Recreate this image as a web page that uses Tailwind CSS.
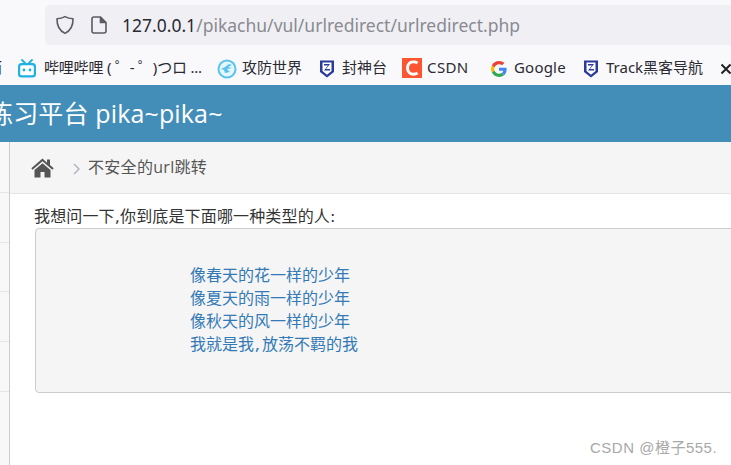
<!DOCTYPE html>
<html>
<head>
<meta charset="utf-8">
<script src="https://cdn.jsdelivr.net/npm/@tailwindcss/browser@4"></script>
</head>
<body class="w-[731px] h-[465px] overflow-hidden bg-white font-['Open_Sans','Noto_Sans_CJK_SC',sans-serif] relative">
  <!-- URL bar -->
  <div class="h-[51px] bg-[#f9f9fb] pt-[5px] pl-[45px]">
    <div class="h-[40px] bg-[#f0f0f4] rounded-l-[5px] flex items-center">
      <svg class="ml-[10px] w-[20px] h-[20px]" viewBox="0 0 20 20" fill="none" stroke="#5b5b66" stroke-width="1.6"><path d="M10 1.600 C12.500 3 15 3.600 18 3.800 C18.200 11 15.500 15.800 10 18.400 C4.500 15.800 1.800 11 2 3.800 C5 3.600 7.500 3 10 1.600Z" stroke-linejoin="round"/></svg>
      <svg class="ml-[16px] w-[16px] h-[18px]" viewBox="0 0 16 18" fill="none" stroke="#5b5b66" stroke-width="1.6"><path d="M3 1h6.500L15 6.500V15a2 2 0 0 1-2 2H3a2 2 0 0 1-2-2V3a2 2 0 0 1 2-2Z"/><path d="M9.500 1v5.500H15" fill="#5b5b66"/></svg>
      <div class="ml-[15px] text-[17.5px] leading-[26px] font-['Noto_Sans',sans-serif] text-[#8a8a92] whitespace-nowrap"><span class="text-[#2b2a33]">127.0.0.1</span>/pikachu/vul/urlredirect/urlredirect.php</div>
    </div>
  </div>
  <!-- Bookmarks -->
  <div class="h-[34px] bg-[#f9f9fb] text-[15px] leading-[20px] text-[#2b2a33] whitespace-nowrap font-['Noto_Sans','Noto_Sans_CJK_SC',sans-serif] relative overflow-hidden">
    <span class="absolute left-[-13px] top-[6px]">而</span>
    <svg class="absolute left-[17px] top-[8px] w-[20px] h-[20px]" viewBox="0 0 20 20"><path d="M5 1l3 3M15 1l-3 3" stroke="#20b0e3" stroke-width="1.800" stroke-linecap="round"/><rect x="1" y="4" width="18" height="14.500" rx="3.500" fill="#20b0e3"/><rect x="3.200" y="6.200" width="13.600" height="10" rx="1.500" fill="#fff"/><circle cx="7" cy="11" r="1.400" fill="#20b0e3"/><circle cx="13" cy="11" r="1.400" fill="#20b0e3"/></svg>
    <span class="absolute left-[44px] top-[6px] tracking-[-0.2px]">哔哩哔哩 ( ゜- ゜)つロ ...</span>
    <svg class="absolute left-[217px] top-[8px] w-[20px] h-[20px]" viewBox="0 0 20 20"><circle cx="10" cy="10" r="9.500" fill="#5cc3ea"/><circle cx="10" cy="10" r="7.500" fill="#e5f6fc"/><path d="M4 10c3-1 5-3 8-5l3 1-4 2 4 1-5 1 3 3-5 1-1-3Z" fill="#5cc3ea"/></svg>
    <span class="absolute left-[242px] top-[6px]">攻防世界</span>
    <svg class="absolute left-[319px] top-[8px] w-[16px] h-[20px]" viewBox="0 0 16 20"><path d="M1 1.500h14V13l-7 5.500L1 13Z" fill="#2a3a9c"/><path d="M3.500 3.500h9V12L8 15.700 3.500 12Z" fill="#fff"/><path d="M5 5h6L7 10h4v1.500H5L9 6.500H5Z" fill="#2a3a9c"/></svg>
    <span class="absolute left-[342px] top-[6px]">封神台</span>
    <div class="absolute left-[402px] top-[7px] w-[20px] h-[20px] bg-[#fc5531] flex items-center justify-center">
      <svg class="w-[14px] h-[16px]" viewBox="0 0 14 16" fill="none" stroke="#fff" stroke-width="3"><path d="M12.500 3.200A6 6 0 0 0 8.500 1.800 C5 1.800 2.500 4.600 2.500 8 S5 14.200 8.500 14.200A6 6 0 0 0 12.500 12.800"/></svg>
    </div>
    <span class="absolute left-[427px] top-[6px] tracking-[0.4px]">CSDN</span>
    <svg class="absolute left-[491px] top-[10px] w-[16px] h-[16px]" viewBox="0 0 48 48"><path fill="#EA4335" d="M24 9.500c3.500 0 6.700 1.200 9.200 3.600l6.900-6.900C35.900 2.400 30.500 0 24 0 14.600 0 6.500 5.400 2.600 13.200l8 6.200C12.400 13.700 17.700 9.500 24 9.500z"/><path fill="#4285F4" d="M46.900 24.500c0-1.600-.1-3.100-.4-4.500H24v9h12.900c-.6 3-2.200 5.500-4.700 7.200l7.700 6c4.500-4.200 7-10.300 7-17.700z"/><path fill="#FBBC05" d="M10.500 28.600c-.5-1.400-.8-3-.8-4.600s.3-3.200.8-4.600l-8-6.200C.9 16.500 0 20.100 0 24s.9 7.500 2.600 10.800l7.900-6.200z"/><path fill="#34A853" d="M24 48c6.500 0 11.900-2.100 15.900-5.800l-7.700-6c-2.200 1.400-4.900 2.300-8.200 2.300-6.300 0-11.600-4.200-13.500-9.900l-8 6.200C6.500 42.600 14.600 48 24 48z"/></svg>
    <span class="absolute left-[514px] top-[6px] tracking-[0.2px]">Google</span>
    <svg class="absolute left-[583px] top-[8px] w-[16px] h-[20px]" viewBox="0 0 16 20"><path d="M1 1.500h14V13l-7 5.500L1 13Z" fill="#2a3a9c"/><path d="M3.500 3.500h9V12L8 15.700 3.500 12Z" fill="#fff"/><path d="M5 5h6L7 10h4v1.500H5L9 6.500H5Z" fill="#2a3a9c"/></svg>
    <span class="absolute left-[606px] top-[6px]">Track黑客导航</span>
    <svg class="absolute left-[720px] top-[12px] w-[12px] h-[12px]" viewBox="0 0 12 12" fill="none" stroke="#222" stroke-width="2"><path d="M1.500 1.500l9 9M10.500 1.500l-9 9"/></svg>
  </div>
  <!-- Navbar -->
  <div class="h-[57px] bg-[#438eb9] text-white text-[25px] tracking-[0.15px] leading-[57px] whitespace-nowrap relative overflow-hidden">
    <span class="absolute left-[-12px] top-0">练习平台 pika~pika~</span>
  </div>
  <!-- Body -->
  <div class="flex h-[323px]">
    <div class="w-[10px] bg-[#f8f8f8] border-r border-[#cccccc] shrink-0 flex flex-col">
      <div class="h-[51px] border-b border-[#e5e5e5]"></div>
      <div class="h-[50px] border-b border-[#e5e5e5]"></div>
      <div class="h-[49px] border-b border-[#e5e5e5]"></div>
      <div class="h-[50px] border-b border-[#e5e5e5]"></div>
      <div class="h-[50px] border-b border-[#e5e5e5]"></div>
    </div>
    <div class="flex-1 min-w-0">
      <div class="h-[52px] bg-[#f5f5f5] border-b border-[#e5e5e5] flex items-center text-[#555] text-[16px]">
        <svg class="ml-[21px] w-[23px] h-[20px]" viewBox="0 0 23 20" fill="#555"><path d="M11.500 0.500L0.300 10.300l1.300 1.500L11.500 3.300l9.900 8.500 1.300-1.500-3.700-3.200V1.500h-3v3.200Z"/><path d="M3.500 12L11.500 5.200 19.500 12v7.500h-6v-5.500h-4v5.500h-6Z"/></svg>
        <svg class="ml-[19px] mt-[2px] w-[7px] h-[12px]" viewBox="0 0 7 12" fill="none" stroke="#b2b6bf" stroke-width="1.500"><path d="M1 1l5 5-5 5"/></svg>
        <span class="ml-[8px] tracking-[0.3px] -mt-[1px]">不安全的url跳转</span>
      </div>
      <div class="pl-[25px] pt-[11px]">
        <div class="h-[23px] -ml-[1px] tracking-[0.15px] text-[16px] leading-[23px] text-[#333] whitespace-nowrap font-['DejaVu_Sans','Noto_Sans_CJK_SC',sans-serif]">我想问一下,你到底是下面哪一种类型的人:</div>
        <div class="h-[165px] -mr-[10px] bg-[#f5f5f5] border border-[#cccccc] rounded-[4px] pl-[154px] pt-[35px] text-[#337ab7] text-[16px] leading-[23px] whitespace-nowrap">
          <div>像春天的花一样的少年</div>
          <div>像夏天的雨一样的少年</div>
          <div>像秋天的风一样的少年</div>
          <div>我就是我<span class="font-['Liberation_Mono',monospace] text-[13.33px] font-bold">,</span>放荡不羁的我</div>
        </div>
      </div>
    </div>
  </div>
  <div class="absolute left-[590px] top-[439px] text-[15px] tracking-[0.5px] leading-[18px] text-[#a8a8a8] whitespace-nowrap font-['Liberation_Sans','Noto_Sans_CJK_SC',sans-serif]">CSDN @橙子555.</div>
</body>
</html>
